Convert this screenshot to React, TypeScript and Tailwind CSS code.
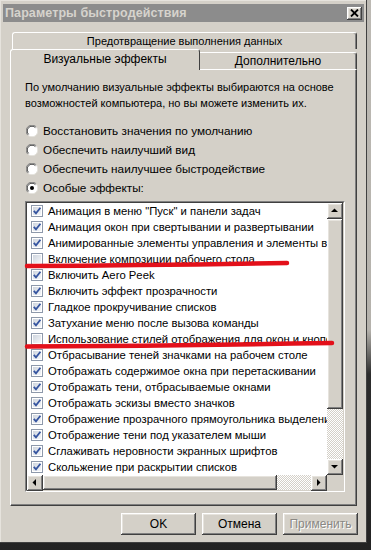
import React from "react";

const items: [string, boolean][] = [
  ['Анимация в меню "Пуск" и панели задач', true],
  ["Анимация окон при свертывании и развертывании", true],
  ["Анимированные элементы управления и элементы внутри окна", true],
  ["Включение композиции рабочего стола", false],
  ["Включить Aero Peek", true],
  ["Включить эффект прозрачности", true],
  ["Гладкое прокручивание списков", true],
  ["Затухание меню после вызова команды", true],
  ["Использование стилей отображения для окон и кнопок", false],
  ["Отбрасывание теней значками на рабочем столе", true],
  ["Отображать содержимое окна при перетаскивании", true],
  ["Отображать тени, отбрасываемые окнами", true],
  ["Отображать эскизы вместо значков", true],
  ["Отображение прозрачного прямоугольника выделения", true],
  ["Отображение тени под указателем мыши", true],
  ["Сглаживать неровности экранных шрифтов", true],
  ["Скольжение при раскрытии списков", true],
];

const radios = [
  "Восстановить значения по умолчанию",
  "Обеспечить наилучший вид",
  "Обеспечить наилучшее быстродействие",
  "Особые эффекты:",
];

// classic 3d bevel used by buttons, tabs and scroll arrows
const raised =
  "bg-[#d4d0c8] shadow-[inset_-1px_-1px_#404040,inset_1px_1px_#ffffff,inset_-2px_-2px_#808080,inset_2px_2px_#e6e3dd]";
const checker =
  "bg-[repeating-conic-gradient(#d4d0c8_0_25%,#ffffff_0_50%)] bg-[length:2px_2px]";

function Radio({ on }: { on: boolean }) {
  return (
    <svg width="12" height="12" viewBox="0 0 12 12" className="flex-none">
      <circle cx="6" cy="6" r="5.5" fill="#fff" />
      <path d="M1.8 10.2 A5.5 5.5 0 0 1 10.2 1.8" stroke="#808080" strokeWidth="1" fill="none" />
      <path d="M2.6 9.4 A4.5 4.5 0 0 1 9.4 2.6" stroke="#404040" strokeWidth="1" fill="none" />
      <path d="M10.2 1.8 A5.5 5.5 0 0 1 1.8 10.2" stroke="#e4e2dc" strokeWidth="1" fill="none" />
      {on && <circle cx="6" cy="6" r="2" fill="#000" />}
    </svg>
  );
}

function Check({ on }: { on: boolean }) {
  return (
    <svg width="12" height="12" viewBox="0 0 12 12" className="flex-none">
      <defs>
        <linearGradient id="cb" x1="0" y1="0" x2="1" y2="1">
          <stop offset="0" stopColor="#cfd5de" />
          <stop offset="1" stopColor="#f4f6f9" />
        </linearGradient>
      </defs>
      <rect x="0.5" y="0.5" width="11" height="11" fill="#fff" stroke="#8e99ab" />
      <rect x="2" y="2" width="8" height="8" fill="url(#cb)" />
      {on && <path d="M2.8 5.8 L5 8.4 L9.4 2.8" stroke="#3554a0" strokeWidth="1.8" fill="none" />}
    </svg>
  );
}

function Arrow({ dir }: { dir: "up" | "down" | "left" | "right" }) {
  const pts = {
    up: "4,9 11,9 7.5,5.5",
    down: "4,6 11,6 7.5,9.5",
    left: "9,4 9,11 5.5,7.5",
    right: "6,4 6,11 9.5,7.5",
  }[dir];
  return (
    <div className={`${raised} w-[16px] h-[16px] flex-none`}>
      <svg width="16" height="16" viewBox="0 0 16 16">
        <polygon points={pts} fill="#000" />
      </svg>
    </div>
  );
}

export default function App() {
  return (
    <div className="relative w-[371px] h-[550px] overflow-hidden bg-[linear-gradient(180deg,#bdbab4_0%,#b5b2ac_60%,#2c2c2c_68%,#232323_100%)] font-['Liberation_Sans',Arial,sans-serif] text-[12px] text-black">
      <div className="w-[367px] h-[543px] bg-[#d4d0c8] flex flex-col shadow-[inset_-1px_-1px_#404040,inset_1px_1px_#e6e3dd]">
        {/* title bar */}
        <div className="mx-[3px] mt-[4px] h-[18px] bg-[#8c8c8c] flex items-center pl-[2px] pr-[2px]">
          <span className="font-bold text-[12.5px] text-[#d6d3cd] tracking-[0.1px]">Параметры быстродействия</span>
          <div className={`${raised} ml-auto w-[15px] h-[13px] flex items-center justify-center`}>
            <svg width="9" height="8" viewBox="0 0 9 8">
              <path d="M1 0.5 L8 7.5 M8 0.5 L1 7.5" stroke="#000" strokeWidth="1.8" />
            </svg>
          </div>
        </div>

        {/* tabs */}
        <div className="px-[10px] mt-[10px] flex flex-col">
          <div className="ml-[2px] h-[17px] rounded-t-[3px] border-t border-l border-white border-r border-r-[#404040] shadow-[inset_-1px_0_#808080] flex items-center justify-center text-[11px]">
            Предотвращение выполнения данных
          </div>
          <div className="h-[20px] flex items-start">
            <div className="relative z-10 w-[190px] h-[21px] bg-[#d4d0c8] rounded-t-[3px] border-t border-l border-white border-r border-r-[#404040] flex items-center justify-center pb-[2px]">
              Визуальные эффекты
            </div>
            <div className="flex-1 mt-[3px] h-[17px] rounded-tr-[3px] border-t border-white border-r border-r-[#404040] shadow-[inset_-1px_0_#808080] flex items-center justify-center">
              Дополнительно
            </div>
          </div>

          {/* panel */}
          <div className="h-[437px] border-t border-l border-white border-r border-b border-r-[#404040] border-b-[#404040] shadow-[inset_-1px_-1px_#808080] pl-[14px] pt-[9px] flex flex-col">
            <p className="leading-[16px] text-[11px] whitespace-nowrap">
              По умолчанию визуальные эффекты выбираются на основе
              <br />
              возможностей компьютера, но вы можете изменить их.
            </p>
            <div className="mt-[10px] flex flex-col text-[11.75px]">
              {radios.map((r, i) => (
                <div key={r} className="h-[19px] flex items-center gap-[5px] pl-[1px]">
                  <Radio on={i === 3} />
                  <span>{r}</span>
                </div>
              ))}
            </div>

            {/* list box */}
            <div className="mt-[4px] w-[320px] h-[291px] border-t border-l border-[#808080] border-r border-b border-r-white border-b-white">
              <div className="w-full h-full border-t border-l border-[#404040] border-r border-b border-r-[#d4d0c8] border-b-[#d4d0c8] bg-white flex flex-col">
                <div className="flex flex-1 min-h-0">
                  <div className="flex-1 min-w-0 overflow-hidden flex flex-col text-[11.3px]">
                    {items.map(([label, on]) => (
                      <div key={label} className="h-[16px] flex-none flex items-center gap-[5px] pl-[4px] whitespace-nowrap">
                        <Check on={on} />
                        <span>{label}</span>
                      </div>
                    ))}
                  </div>
                  <div className="w-[16px] flex flex-col">
                    <Arrow dir="up" />
                    <div className={`${raised} h-[190px] flex-none`} />
                    <div className={`${checker} flex-1`} />
                    <Arrow dir="down" />
                  </div>
                </div>
                <div className="h-[15px] flex flex-none">
                  <div className="flex-1 flex">
                    <Arrow dir="left" />
                    <div className={`${raised} w-[234px] flex-none`} />
                    <div className={`${checker} flex-1`} />
                    <Arrow dir="right" />
                  </div>
                  <div className="w-[16px] bg-[#d4d0c8]" />
                </div>
              </div>
            </div>
          </div>
        </div>

        {/* buttons */}
        <div className="mt-[7px] flex justify-end gap-[6px] pr-[9px]">
          <div className={`${raised} w-[75px] h-[22px] flex items-center justify-center`}>OK</div>
          <div className={`${raised} w-[75px] h-[22px] flex items-center justify-center`}>Отмена</div>
          <div className={`${raised} w-[75px] h-[22px] flex items-center justify-center text-[#8a8884] [text-shadow:1px_1px_#ffffff]`}>
            Применить
          </div>
        </div>
      </div>

      {/* hand-drawn red marks */}
      <svg className="absolute inset-0 pointer-events-none" width="371" height="550" viewBox="0 0 371 550">
        <path d="M27 266 Q150 265.5 287 263" stroke="#e3101a" strokeWidth="4.5" strokeLinecap="round" fill="none" />
        <path d="M27 346.5 Q180 345.5 332 343" stroke="#e3101a" strokeWidth="4.5" strokeLinecap="round" fill="none" />
      </svg>
    </div>
  );
}
